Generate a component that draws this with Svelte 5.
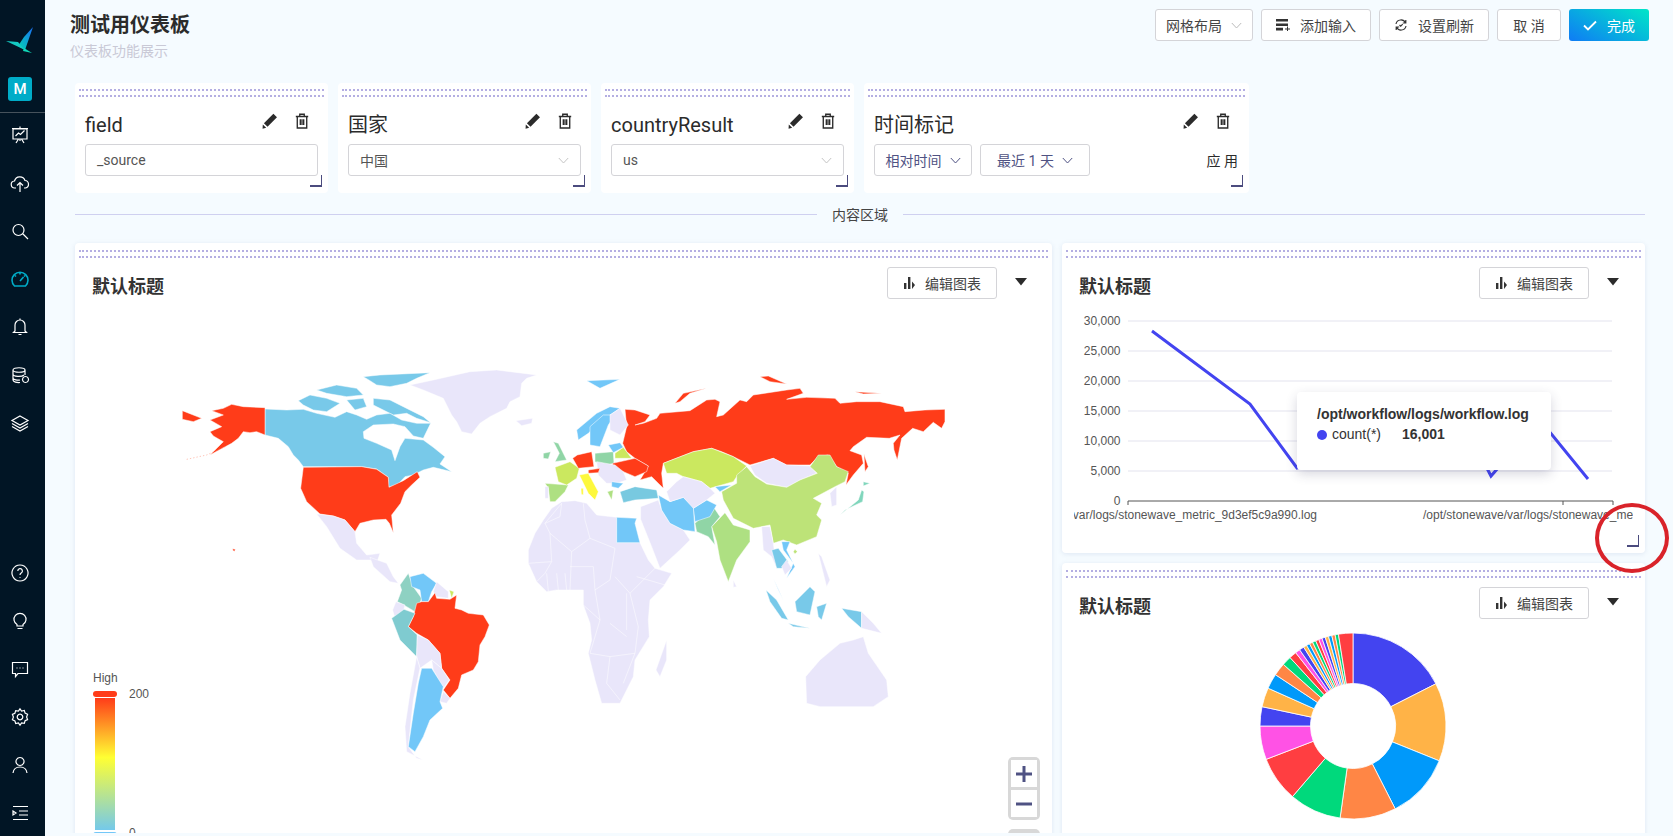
<script>
  const navTop = [
    "M3 4h14v10H3z M2 3.5h16 M5.5 11l3-3 2 1.5 4-4 M10 14v2 M6 18l2.5-4 M14 18l-2.5-4 M10 1.5v2",
    "M6 15H5a3.5 3.5 0 0 1-.5-7A5.5 5.5 0 0 1 15 7.5 3.8 3.8 0 0 1 15.5 15H14 M10 19v-9 M7 12.5l3-3 3 3",
    "M8.5 3.5a5.5 5.5 0 1 0 0 11a5.5 5.5 0 1 0 0-11z M12.5 12.5l5.5 5.5",
    "M4.5 17a8 8 0 1 1 11 0z M10 4v1.5 M5 6.5l1 1 M15 6.5l-1 1 M10 12l3.5-4",
    "M10 3a5 5 0 0 0-5 5v6l-1.5 1.5h13L15 14V8a5 5 0 0 0-5-5z M10 1.5V3 M8.5 17.5h3",
    "M3 5c0-3 12-3 12 0v5 M3 5v10c0 2 4 2.8 7 2.5 M3 5c0 3 12 3 12 0 M3 9c0 3 9 3 11 1 M3 13c0 2 5 2.5 7 2 M15.5 11.5a3 3 0 1 0 .01 0z",
    "M10 3l8 4.5-8 4.5-8-4.5z M2 10.5l8 4.5 8-4.5 M2 13.5l8 4.5 8-4.5"
  ];
  const navBottom = [
    "M10 2a8 8 0 1 0 .01 0z M7.8 8a2.3 2.3 0 1 1 3.4 2c-.8.5-1.2 1-1.2 2 M10 14v.8",
    "M7 13.5a6 6 0 1 1 6 0V15H7z M7.5 17.5h5",
    "M2.5 3.5h15v11H8l-2.5 3v-3h-3z M6.5 9h1 M9.5 9h1 M12.5 9h1",
    "M10 1.8l1.6 2.2 2.7-.5.8 2.6 2.5 1.2-1 2.7 1 2.6-2.5 1.2-.8 2.6-2.7-.5L10 18.2l-1.6-2.2-2.7.5-.8-2.6-2.5-1.2 1-2.6-1-2.7 2.5-1.2.8-2.6 2.7.5z M10 7.2a2.8 2.8 0 1 0 .01 0z",
    "M10 2.5a4 4 0 1 0 .01 0z M3 18c.5-4 3-6 7-6s6.5 2 7 6",
    "M3 3.5h15 M9 8h9 M9 12h9 M3 16.5h15 M3 8l3 2-3 2z"
  ];

  const filters = [
    { title: "field", value: "_source", kind: "input" },
    { title: "国家", value: "中国", kind: "select" },
    { title: "countryResult", value: "us", kind: "select" },
    { title: "时间标记", kind: "time" }
  ];

  // map colours
  const L = "#e9e6fa", R = "#ff3c19", B = "#72c7f8", C = "#78c9e9", G = "#bde378", K = "#cbe85f", A = "#aee082", M = "#90d5a6";

  const americas = [
    [L, "750,75 820,60 930,35 1010,30 1130,45 1100,55 1085,70 1080,110 1050,125 1040,145 990,170 960,190 935,222 905,215 890,185 875,165 850,115 790,90"],
    [L, "1068,182 1118,175 1115,190 1085,197"],
    [C, "610,50 660,45 810,38 770,55 740,70 690,80 650,75 630,62"],
    [C, "640,115 690,120 730,140 790,170 812,188 770,175 740,160 700,165 670,150 640,135"],
    [C, "415,122 450,105 500,115 540,130 500,155 460,150 430,135"],
    [C, "470,90 530,75 590,85 610,105 560,110 500,100"],
    [C, "560,120 610,115 620,140 585,150"],
    [C, "315,147 380,150 430,148 470,160 525,172 560,155 590,165 620,178 650,165 690,160 725,180 770,190 812,190 790,235 760,228 735,200 700,192 640,195 610,215 612,235 650,250 695,270 705,302 720,260 735,235 790,240 820,262 855,290 840,312 875,335 845,328 820,322 790,330 760,345 735,350 715,372 685,382 685,352 650,327 605,320 430,320 415,300 400,285 385,260 355,235 315,225"],
    [R, "430,322 605,320 650,328 685,352 687,382 730,362 772,335 780,352 755,375 735,395 722,430 695,465 700,518 688,490 678,478 640,480 600,490 585,515 555,480 520,468 480,462 440,425 422,385"],
    [R, "215,133 250,140 315,143 315,225 290,215 270,218 250,215 235,235 215,250 150,285 190,245 160,228 150,215 185,200 150,180 190,165 155,152 190,145"],
    [R, "67,152 125,175 100,185 67,178"],
    [R, "218,566 226,568 224,574 219,572"],
    [L, "470,462 520,468 555,480 585,515 590,550 620,585 660,580 650,610 630,600 590,600 540,565 500,500"],
    [L, "630,592 680,610 700,650 715,670 690,665 640,620"],
    ["#8ed1c2", "745,640 760,680 785,715 780,730 765,755 740,740 712,725 725,690 720,675"],
    [B, "750,650 790,640 830,670 815,695 805,725 785,725 780,690 755,680"],
    [L, "830,665 865,695 865,715 830,710 820,695"],
    [K, "868,690 882,695 875,715"],
    [R, "770,730 785,725 805,725 825,698 830,715 870,718 890,705 885,745 905,750 925,760 970,765 988,795 975,830 960,855 955,905 940,930 905,945 895,985 870,1015 850,990 870,960 845,925 840,880 805,840 770,820 745,800 760,770"],
    [L, "708,725 735,735 730,755 705,775 698,750"],
    ["#7fcbd0", "732,748 765,760 745,800 772,825 770,890 720,840 695,775"],
    [L, "772,825 805,840 840,880 845,925 815,900 780,925 770,890"],
    [L, "770,890 780,925 760,1020 745,1160 770,1195 790,1200 740,1175 735,1100 750,1000"],
    [L, "815,900 845,925 868,960 850,985 820,930"],
    [L, "850,995 870,1015 860,1030 840,1025"],
    [B, "785,925 815,925 850,980 840,1025 848,1045 810,1080 790,1130 765,1175 745,1160 760,1060 775,970"]
  ];

  const eurasia = [
    [L, "125,425 165,422 200,430 230,465 290,472 290,548 360,548 385,600 405,625 455,640 430,680 390,720 385,780 388,830 345,900 340,950 300,1030 245,1030 225,960 205,880 215,840 210,790 190,735 190,690 150,690 110,690 80,695 50,665 25,610 25,570 45,520 70,480 95,445"],
    [L, "440,840 440,900 420,950 408,930"],
    [L, "857,950 900,900 960,850 1000,840 1030,830 1045,880 1100,960 1105,1010 1060,1040 900,1040 860,1030"],
    [L, "362,440 415,420 425,450 450,490 490,510 510,540 480,570 420,625 395,560 362,478"],
    [B, "290,472 350,475 345,490 360,548 290,548"],
    [R, "315,148 345,150 390,165 375,185 345,195 370,190 410,175 420,160 510,152 560,120 585,118 600,125 590,170 610,165 660,120 680,125 700,105 800,90 840,85 850,100 800,118 860,112 945,115 960,130 1010,125 1080,125 1150,140 1155,155 1215,150 1275,148 1275,185 1265,205 1240,187 1210,215 1178,205 1145,235 1132,300 1122,270 1120,250 1140,225 1108,235 1040,232 1000,260 990,272 1025,285 1030,310 1000,345 978,375 985,340 950,320 925,285 895,290 870,315 800,315 760,295 690,315 640,290 605,275 575,265 520,275 430,310 425,340 430,385 395,350 360,360 375,335 385,318 345,295 320,275 308,250 320,200"],
    [R, "1032,283 1045,320 1035,335"],
    [R, "465,130 490,100 560,85 510,100 480,125"],
    [R, "720,50 745,48 800,72 750,65"],
    [R, "1005,95 1085,100 1030,102"],
    [K, "430,310 520,275 575,265 640,290 680,318 650,350 640,365 570,385 545,365 490,350 470,340 440,340"],
    [L, "690,318 760,295 800,315 870,318 890,340 840,360 800,382 740,370 705,345"],
    [G, "680,320 705,350 740,372 800,382 840,360 892,340 870,320 895,285 930,285 950,320 985,335 975,365 945,380 880,415 905,430 890,465 905,480 890,530 830,555 790,540 760,550 750,495 700,505 640,475 610,420 605,395 650,370 650,345"],
    [A, "575,500 615,458 640,495 690,510 690,545 650,600 625,665 600,600 590,545"],
    [M, "525,490 580,440 600,470 575,500 585,555 565,530 530,515"],
    [B, "520,445 560,420 590,435 570,470 525,485"],
    [B, "415,405 450,425 490,412 520,440 525,515 490,510 450,490 425,450"],
    ["#78c9e0", "300,395 345,380 410,390 415,415 345,420 310,428"],
    [B, "585,380 635,375 600,395"],
    [L, "470,365 490,350 545,365 570,385 585,400 560,420 520,445 490,412 450,425 440,395"],
    [A, "75,370 145,375 135,395 105,425 90,425 85,385"],
    [L, "75,380 85,380 85,415 75,415"],
    [K, "105,322 150,305 178,325 170,355 140,375 115,365"],
    [M, "100,245 115,250 140,300 105,305 118,280"],
    [M, "70,280 92,275 85,297 70,295"],
    [R, "172,285 215,275 222,320 175,325 158,295"],
    [M, "225,280 280,275 282,310 250,318 225,305"],
    [K, "285,280 310,262 335,295 285,295"],
    [R, "278,310 345,295 385,318 380,335 345,350 310,335 275,325"],
    [B, "265,255 300,248 310,262 280,278"],
    [L, "230,305 285,315 310,335 320,360 290,370 260,370 235,345"],
    [R, "205,330 240,325 235,338 205,340"],
    ["#fdf83c", "178,345 205,340 235,395 225,420 205,400"],
    ["#fdf83c", "183,385 190,385 190,405 184,403"],
    [B, "170,210 230,160 270,140 300,145 240,185 205,220 175,240"],
    [B, "210,200 250,165 285,165 265,195 240,260 210,255"],
    [L, "270,165 300,145 325,195 300,225 270,210"],
    [B, "200,62 300,58 240,85"],
    [B, "275,365 310,370 295,385 275,380"],
    [A, "262,395 280,390 275,420"],
    [L, "725,500 750,500 760,550 770,625 755,590 730,570"],
    [C, "755,570 775,565 805,605 785,625 770,625"],
    [B, "785,545 810,545 800,570 825,620 800,655 820,610 790,570"],
    [L, "785,620 800,600 815,625 795,645"],
    [B, "760,655 790,720 775,690"],
    [C, "738,690 770,720 805,780 785,775 750,725"],
    [C, "825,725 870,680 885,695 870,765 830,755"],
    [C, "805,790 870,805 820,800"],
    [C, "890,740 920,730 905,780 895,770"],
    [C, "965,745 1025,755 1025,805 985,770"],
    [L, "1025,755 1060,790 1085,820 1025,805"],
    ["#80d6bc", "960,465 1015,420 1025,390 1032,395 1028,425 975,450"],
    ["#80d6bc", "1030,365 1050,370 1030,378"],
    [L, "930,400 950,380 950,435 935,440"],
    [L, "895,580 905,590 930,660 920,680"],
    [G, "825,568 832,575 825,582 820,575"],
    [L, "640,660 650,680 640,682"]
  ];

  const africaBorders = "M75,490 125,430 M125,430 120,470 75,490 M75,490 90,520 155,575 210,535 195,480 190,430 M210,535 285,565 M285,565 270,660 225,690 M155,575 150,690 M90,520 95,605 25,610 M95,605 75,640 50,665 M80,640 85,695 M110,640 115,690 M135,640 140,690 M150,620 220,620 225,690 M225,690 240,780 190,735 M240,780 210,880 270,890 345,880 355,800 330,700 285,650 M330,700 405,625 M350,650 435,675 M270,890 260,970 300,1020 M345,880 310,970 M320,700 320,810 M270,790 320,830";

  // donut
  const palette = ["#4344f0", "#ffb347", "#0099fa", "#ff8645", "#00d97c", "#ff3e41", "#ff52e5"];
  const stops = [0, 63, 112, 153, 188, 220.6, 249, 270, 282, 294, 303.5, 311.5, 317.4, 322, 325, 328];
  for (let i = 1; i <= 11; i++) stops.push(328 + i * 2.09);
  stops.push(360);

  function pt(r, deg) {
    const a = (deg - 90) * Math.PI / 180;
    return (1353 + r * Math.cos(a)).toFixed(2) + " " + (726 + r * Math.sin(a)).toFixed(2);
  }
  const slices = stops.slice(0, -1).map((from, i) => {
    const to = stops[i + 1];
    const big = to - from > 180 ? 1 : 0;
    return {
      color: palette[i % 7],
      d: `M${pt(93, from)}A93 93 0 ${big} 1 ${pt(93, to)}L${pt(42.5, to)}A42.5 42.5 0 ${big} 0 ${pt(42.5, from)}Z`
    };
  });

  const yTicks = [["30,000", 321], ["25,000", 351], ["20,000", 381], ["15,000", 411], ["10,000", 441], ["5,000", 471]];
</script>

{#snippet pencil()}
  <svg class="act" width="18" height="18" viewBox="0 0 16 16"><path d="M11 1.5l3.2 3.2-8.4 8.4-3.2-3.2z M1.6 11l3 3L1.4 14.8z" fill="#2b2b2b"/></svg>
{/snippet}
{#snippet trash()}
  <svg class="act" width="18" height="18" viewBox="0 0 16 16" fill="none" stroke="#2b2b2b" stroke-width="1.2"><path d="M2.5 4h11 M6 4V2h4v2 M3.8 4v10.2h8.4V4 M6.5 6.5v5 M8 6.5v5 M9.500 6.500v5"/></svg>
{/snippet}
{#snippet chevron(color)}
  <svg width="11" height="7" viewBox="0 0 11 7" fill="none" stroke={color} stroke-width="1"><path d="M.8 1l4.7 5 4.7-5"/></svg>
{/snippet}
{#snippet chartHead()}
  <div class="chart-head">
    <h3>默认标题</h3>
    <button class="btn edit">
      <svg width="14" height="14" viewBox="0 0 14 14" fill="#333"><path d="M1 7h2.400v6H1z M5 1h2.400v12H5z M9 5.500l3 3.500-3 4z"/></svg>
      编辑图表
    </button>
    <svg class="tri" width="14" height="8" viewBox="0 0 14 8"><path d="M1 0h12L7 7.500z" fill="#2b2b2b"/></svg>
  </div>
{/snippet}

<div class="app">
  <aside class="side">
    <svg class="logo" width="30" height="28" viewBox="0 0 30 28">
      <defs>
        <linearGradient id="wing" x1="1" y1="0" x2="0" y2="1">
          <stop offset="0" stop-color="#1b6cf5" />
          <stop offset="1" stop-color="#00d8b0" />
        </linearGradient>
      </defs>
      <path d="M28 0L19 10 13 19l7 4z" fill="url(#wing)" />
      <path d="M1 14l12 1 7 8z" fill="#14c9c2" />
      <path d="M19 21l8 5-9-2z" fill="#10d8b8" />
    </svg>
    <div class="tile">M</div>
    <div class="rule"></div>
    <nav class="nav">
      {#each navTop as d, i}
        <svg class:on={i === 3} width="20" height="20" viewBox="0 0 20 20"><path {d} /></svg>
      {/each}
    </nav>
    <nav class="nav bottom">
      {#each navBottom as d}
        <svg width="20" height="20" viewBox="0 0 20 20"><path {d} /></svg>
      {/each}
    </nav>
  </aside>

  <main class="main">
    <header class="head">
      <div>
        <h1>测试用仪表板</h1>
        <p>仪表板功能展示</p>
      </div>
      <div class="tools">
        <button class="btn layout">网格布局 {@render chevron("#bbb")}</button>
        <button class="btn w110">
          <svg width="14" height="12" viewBox="0 0 14 12" fill="#333"><path d="M0 0h12v2.600H0z M0 4.400h12V7H0z M0 8.800h7v2.600H0z M9 9.600h5v1H9z M11 7.600h1v5h-1z"/></svg>
          添加输入
        </button>
        <button class="btn w110">
          <svg width="14" height="14" viewBox="0 0 14 14" fill="none" stroke="#333" stroke-width="1.2"><path d="M2 6a5 5 0 0 1 9.500-1 M12 8a5 5 0 0 1-9.500 1 M11.800 2v3h-3 M2.200 12V9h3 M5.500 7l1.200 1.200 2-2"/></svg>
          设置刷新
        </button>
        <button class="btn cancel">取 消</button>
        <button class="btn done">
          <svg width="14" height="11" viewBox="0 0 14 11" fill="none" stroke="#fff" stroke-width="1.800"><path d="M1 5.500l4 4 8-8"/></svg>
          完成
        </button>
      </div>
    </header>

    <section class="filters">
      {#each filters as f}
        <div class="filter" class:wide={f.kind === "time"}>
          <div class="drag"></div>
          <div class="filter-head">
            <span class="filter-title">{f.title}</span>
            {@render pencil()}
            {@render trash()}
          </div>
          {#if f.kind === "time"}
            <div class="time-row">
              <button class="btn time">相对时间 {@render chevron("#4f5283")}</button>
              <button class="btn time">最近 1 天 {@render chevron("#4f5283")}</button>
              <span class="apply">应 用</span>
            </div>
          {:else}
            <div class="field">
              <span>{f.value}</span>
              {#if f.kind === "select"}{@render chevron("#c4c4c4")}{/if}
            </div>
          {/if}
          <i class="grip"></i>
        </div>
      {/each}
    </section>

    <div class="divider"><span>内容区域</span></div>

    <section class="charts">
      <article class="card map-card">
        <div class="drag"></div>
        {@render chartHead()}
        <svg class="map" width="977" height="534" viewBox="75 299 977 534">
          <defs>
            <linearGradient id="heat" x1="0" y1="0" x2="0" y2="1">
              <stop offset="0" stop-color="#ff3c19" />
              <stop offset=".45" stop-color="#ffff33" />
              <stop offset="1" stop-color="#74c9ea" />
            </linearGradient>
          </defs>
          <g transform="translate(160 360) scale(.3333)" stroke="#fff" stroke-width="1.500" stroke-linejoin="round">
            {#each americas as [fill, points]}
              <polygon {fill} {points} />
            {/each}
            <path d="M80,298 140,285 200,258" fill="none" stroke="#ff8a70" stroke-width="1.500" stroke-dasharray="4 6" />
          </g>
          <g transform="translate(520 360) scale(.3333)" stroke="#fff" stroke-width="1.500" stroke-linejoin="round">
            {#each eurasia as [fill, points]}
              <polygon {fill} {points} />
            {/each}
            <path d={africaBorders} fill="none" />
          </g>
          <text x="93" y="682" class="legend">High</text>
          <rect x="93" y="691" width="24" height="6" rx="3" fill="#ff3c19" />
          <rect x="95" y="698" width="20" height="132" fill="url(#heat)" />
          <rect x="93" y="832" width="24" height="6" rx="3" fill="#72c7f8" />
          <text x="129" y="698" class="legend">200</text>
          <text x="129" y="837" class="legend">0</text>
        </svg>
        <div class="zoom">
          <span><svg width="16" height="16" viewBox="0 0 16 16"><path d="M0 6.500h16v3H0z M6.500 0h3v16h-3z" fill="#4f5283"/></svg></span>
          <span><svg width="16" height="4" viewBox="0 0 16 4"><path d="M0 .5h16v3H0z" fill="#4f5283"/></svg></span>
        </div>
        <div class="zoom third"></div>
      </article>

      <div class="side-charts">
        <article class="card line-card">
          <div class="drag"></div>
          {@render chartHead()}
          <svg class="line" width="583" height="234" viewBox="1062 299 583 234">
            <defs>
              <clipPath id="labels"><rect x="1074" y="500" width="559" height="30" /></clipPath>
            </defs>
            {#each yTicks as [label, y]}
              <line x1="1128" x2="1612" y1={y} y2={y} stroke="#e3e3ee" />
              <text x="1120.500" y={y + 4} text-anchor="end">{label}</text>
            {/each}
            <text x="1120.500" y="505" text-anchor="end">0</text>
            <path d="M1128 505V501H1613V505 M1563 501v4" fill="none" stroke="#555" />
            <path d="M1152 331L1250 404 1297 468 1400 440 1475 445 1491 476 1540 420 1588 479" fill="none" stroke="#4344f0" stroke-width="3" />
            <g clip-path="url(#labels)">
              <text x="1317" y="519" text-anchor="end">/opt/stonewave/var/logs/stonewave_metric_9d3ef5c9a990.log</text>
              <text x="1423" y="519">/opt/stonewave/var/logs/stonewave_metric_9d3ef5c9a990.log</text>
            </g>
          </svg>
          <div class="tip">
            <b>/opt/workflow/logs/workflow.log</b>
            <div class="tip-row"><i></i>count(*)<b>16,001</b></div>
          </div>
          <i class="grip"></i>
        </article>

        <article class="card pie-card">
          <div class="drag"></div>
          {@render chartHead()}
          <svg width="583" height="214" viewBox="1062 619 583 214">
            {#each slices as s}
              <path d={s.d} fill={s.color} stroke="#fff" stroke-width=".8" />
            {/each}
          </svg>
        </article>
      </div>
    </section>
    <div class="mark"></div>
  </main>
</div>

<style>
  :global(body) {
    margin: 0;
    background: #f5fbff;
  }
  .app {
    display: flex;
    width: 1673px;
    height: 836px;
    overflow: hidden;
    font-family: Roboto, "Noto Sans CJK SC", sans-serif;
    color: #2b2b2b;
  }
  .side {
    width: 45px;
    flex: none;
    box-sizing: border-box;
    padding-right: 5px;
    background: #011525;
    display: flex;
    flex-direction: column;
    align-items: center;
  }
  .logo {
    margin-top: 27px;
  }
  .tile {
    width: 24px;
    height: 24px;
    margin-top: 22px;
    border-radius: 3px;
    background: #00acc8;
    color: #fff;
    font-size: 15px;
    font-weight: 500;
    line-height: 24px;
    text-align: center;
  }
  .rule {
    align-self: stretch;
    height: 1px;
    margin: 11px -5px 0 0;
    background: #46525c;
  }
  .nav {
    display: flex;
    flex-direction: column;
    gap: 28px;
    margin-top: 12px;
  }
  .nav.bottom {
    margin-top: auto;
    margin-bottom: 13px;
  }
  .nav svg {
    fill: none;
    stroke: #fff;
    stroke-width: 1.2;
  }
  .nav svg.on {
    stroke: #00acc8;
    stroke-width: 1.6;
  }

  .main {
    position: relative;
    flex: 1;
    min-width: 0;
    height: 833px;
    overflow: hidden;
    display: flex;
    flex-direction: column;
  }
  .head {
    height: 83px;
    flex: none;
    display: flex;
    justify-content: space-between;
    padding: 9px 24px 0 25px;
    box-sizing: border-box;
  }
  h1 {
    margin: 0;
    font-size: 20px;
    font-weight: 700;
    line-height: 32px;
    color: #2b2b2b;
  }
  .head p {
    margin: 0;
    font-size: 14px;
    line-height: 20px;
    color: #c9c9d6;
  }
  .tools {
    display: flex;
    gap: 8px;
    align-items: flex-start;
  }
  .btn {
    height: 32px;
    box-sizing: border-box;
    display: inline-flex;
    align-items: center;
    justify-content: center;
    gap: 10px;
    padding: 0;
    border: 1px solid #d4d4d8;
    border-radius: 3px;
    background: #fff;
    color: #444;
    font: inherit;
    font-size: 14px;
  }
  .layout {
    width: 98px;
    gap: 9px;
  }
  .w110 {
    width: 110px;
  }
  .cancel {
    width: 64px;
  }
  .done {
    width: 80px;
    border: 0;
    color: #fff;
    background: linear-gradient(30deg, #0f7bf5, #00e6c8);
  }

  .filters {
    display: flex;
    gap: 10px;
    padding-left: 30px;
    flex: none;
  }
  .filter {
    position: relative;
    width: 253px;
    height: 110px;
    box-sizing: border-box;
    padding: 0 10px;
    background: #fff;
    border-radius: 4px;
  }
  .filter.wide {
    width: 385px;
  }
  .drag {
    height: 8px;
    box-sizing: border-box;
    margin: 6px -6px 0;
    border-top: 2px dotted #b4aee2;
    border-bottom: 2px dotted #b4aee2;
  }
  .filter-head {
    display: flex;
    align-items: center;
    height: 30px;
    margin-top: 13px;
    padding-right: 7px;
    gap: 14px;
  }
  .filter-title {
    flex: 1;
    font-size: 20px;
    line-height: 30px;
  }
  .act {
    margin-top: -8px;
  }
  .field {
    height: 32px;
    margin-top: 4px;
    box-sizing: border-box;
    display: flex;
    align-items: center;
    justify-content: space-between;
    padding: 0 11px;
    border: 1px solid #d4d4d8;
    border-radius: 3px;
    font-size: 14px;
    color: #555;
  }
  .time-row {
    display: flex;
    gap: 8px;
    margin-top: 4px;
    align-items: center;
  }
  .time {
    color: #4f5283;
    gap: 8px;
    width: 98px;
  }
  .time + .time {
    width: 110px;
  }
  .apply {
    margin-left: auto;
    margin-right: 1px;
    font-size: 14px;
  }
  .grip {
    position: absolute;
    right: 6px;
    bottom: 6px;
    width: 12px;
    height: 12px;
    box-sizing: border-box;
    border-right: 1px solid #4b4b7e;
    border-bottom: 2px solid #4b4b7e;
  }

  .divider {
    flex: none;
    display: flex;
    align-items: center;
    height: 20px;
    margin: 11px 28px 0 30px;
    font-size: 14px;
    color: #444;
  }
  .divider span {
    padding: 0 15px;
  }
  .divider::before,
  .divider::after {
    content: "";
    flex: 1;
    height: 1px;
    background: #cfd0f0;
  }

  .charts {
    flex: 1;
    min-height: 0;
    display: flex;
    gap: 10px;
    margin-top: 19px;
    padding-left: 30px;
  }
  .card {
    position: relative;
    background: #fff;
    border-radius: 4px;
    box-shadow: 0 1px 5px rgba(90, 110, 170, 0.14);
    overflow: hidden;
  }
  .card .drag {
    margin: 7px 4px 0;
  }
  .map-card {
    width: 977px;
    height: 600px;
  }
  .side-charts {
    width: 583px;
    display: flex;
    flex-direction: column;
    gap: 10px;
  }
  .line-card {
    height: 310px;
    flex: none;
    overflow: visible;
  }
  .pie-card {
    height: 300px;
    flex: none;
  }
  .chart-head {
    display: flex;
    align-items: center;
    height: 32px;
    margin-top: 9px;
    padding: 0 25px 0 17px;
    gap: 17px;
  }
  .chart-head h3 {
    flex: 1;
    margin: 4px 0 0;
    font-size: 18px;
    font-weight: 700;
    color: #333;
  }
  .edit {
    width: 110px;
    gap: 8px;
  }
  .tri {
    margin-top: -3px;
  }
  .map-card .chart-head {
    padding-right: 24px;
  }
  svg.map,
  svg.line {
    display: block;
  }
  .legend,
  .line text {
    font-family: "Liberation Sans", Arial, sans-serif;
    font-size: 12px;
    fill: #555;
  }
  .zoom {
    position: absolute;
    left: 933px;
    top: 514px;
    width: 32px;
    box-sizing: border-box;
    display: flex;
    flex-direction: column;
    gap: 3px;
    padding: 3px;
    background: #d8d8d8;
    border-radius: 5px;
  }
  .zoom span {
    height: 27px;
    display: flex;
    align-items: center;
    justify-content: center;
    background: #fff;
  }
  .zoom.third {
    top: 586px;
    height: 30px;
  }
  .tip {
    position: absolute;
    left: 235px;
    top: 149px;
    width: 254px;
    height: 78px;
    box-sizing: border-box;
    padding: 12px 20px;
    background: #fff;
    border-radius: 4px;
    box-shadow: 0 4px 12px rgba(50, 50, 90, 0.2);
    font-family: "Liberation Sans", Arial, sans-serif;
    font-size: 14px;
    line-height: 21px;
    color: #333;
  }
  .tip-row {
    display: flex;
    align-items: center;
    margin-top: -1px;
  }
  .tip-row i {
    width: 10px;
    height: 10px;
    margin-right: 5px;
    border-radius: 50%;
    background: #4344f0;
  }
  .tip-row b {
    margin-left: 21px;
  }
  .mark {
    position: absolute;
    left: 1550px;
    top: 503px;
    width: 74px;
    height: 70px;
    box-sizing: border-box;
    border: 4px solid #d9232a;
    border-radius: 50%;
  }
</style>
